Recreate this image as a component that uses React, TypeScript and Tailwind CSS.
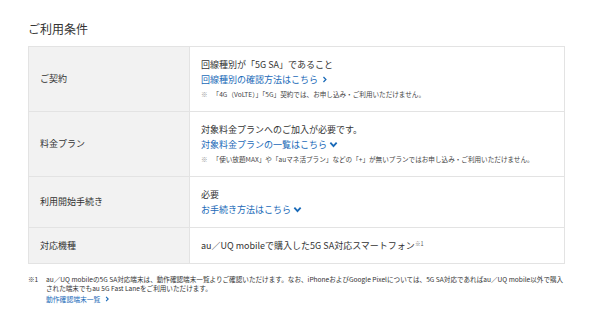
import React from "react";

const font = { fontFamily: '"Noto Sans CJK JP", "Noto Sans", sans-serif' };

const ChevronRight = () => (
  <svg viewBox="0 0 10 10" className="ml-[3px] inline-block h-[7px] w-[7px] align-[0px]">
    <path d="M3.5 1.5 L7 5 L3.5 8.5" fill="none" stroke="currentColor" strokeWidth="1.8" />
  </svg>
);

const ChevronDown = () => (
  <svg viewBox="0 0 10 10" className="ml-[2px] inline-block h-[9px] w-[9px] align-[-1px]">
    <path d="M1.5 3 L5 6.8 L8.5 3" fill="none" stroke="currentColor" strokeWidth="2" />
  </svg>
);

const Row: React.FC<{ label: string; children: React.ReactNode; last?: boolean }> = ({ label, children, last }) => (
  <div className={`flex ${last ? "" : "border-b border-[#e3e3e3]"}`}>
    <div className="flex w-[161px] shrink-0 items-center border-r border-[#e3e3e3] bg-[#f2f2f2] pl-[11px] text-[9px] text-[#333]">
      {label}
    </div>
    <div className="flex-1 px-[11px] py-[10px]">{children}</div>
  </div>
);

const Main: React.FC<{ children: React.ReactNode }> = ({ children }) => (
  <p className="text-[9px] leading-[15px] text-[#333]">{children}</p>
);

const Link: React.FC<{ children: React.ReactNode }> = ({ children }) => (
  <p className="text-[9px] leading-[15px] text-[#1a6ab8]">{children}</p>
);

const Note: React.FC<{ children: React.ReactNode }> = ({ children }) => (
  <p className="mt-[1px] text-[6.6px] leading-[13px] text-[#444]">
    <span className="mr-[5px] text-[#999]">※</span>
    {children}
  </p>
);

export default function App() {
  return (
    <div className="min-h-[317px] w-[590px] bg-white pl-[28px] pr-[25px] pt-[19px]" style={font}>
      <h2 className="mb-[8px] text-[12px] leading-[19px] text-[#333]">ご利用条件</h2>

      <div className="border border-[#e3e3e3]">
        <Row label="ご契約">
          <Main>回線種別が「5G SA」であること</Main>
          <Link>
            回線種別の確認方法はこちら
            <ChevronRight />
          </Link>
          <Note>「4G（VoLTE）」「5G」契約では、お申し込み・ご利用いただけません。</Note>
        </Row>
        <Row label="料金プラン">
          <Main>対象料金プランへのご加入が必要です。</Main>
          <Link>
            対象料金プランの一覧はこちら
            <ChevronDown />
          </Link>
          <Note>「使い放題MAX」や「auマネ活プラン」などの「+」が無いプランではお申し込み・ご利用いただけません。</Note>
        </Row>
        <Row label="利用開始手続き">
          <Main>必要</Main>
          <Link>
            お手続き方法はこちら
            <ChevronDown />
          </Link>
        </Row>
        <Row label="対応機種" last>
          <Main>
            au／UQ mobileで購入した5G SA対応スマートフォン
            <sup className="text-[5.5px] text-[#555]">※1</sup>
          </Main>
        </Row>
      </div>

      <div className="mt-[11px] flex text-[6.6px] text-[#333]">
        <span className="w-[18px] shrink-0 leading-[9px]">※1</span>
        <div>
          <p className="leading-[9px]">
            au／UQ mobileの5G SA対応端末は、動作確認端末一覧よりご確認いただけます。なお、iPhoneおよびGoogle Pixelについては、5G SA対応であればau／UQ mobile以外で購入された端末でもau 5G Fast Laneをご利用いただけます。
          </p>
          <p className="mt-[1px] text-[6.8px] leading-[10px] text-[#1a6ab8]">
            動作確認端末一覧
            <svg viewBox="0 0 10 10" className="ml-[4px] inline-block h-[6px] w-[6px] align-[0px]">
              <path d="M3.5 1.5 L7 5 L3.5 8.5" fill="none" stroke="currentColor" strokeWidth="1.8" />
            </svg>
          </p>
        </div>
      </div>
    </div>
  );
}
